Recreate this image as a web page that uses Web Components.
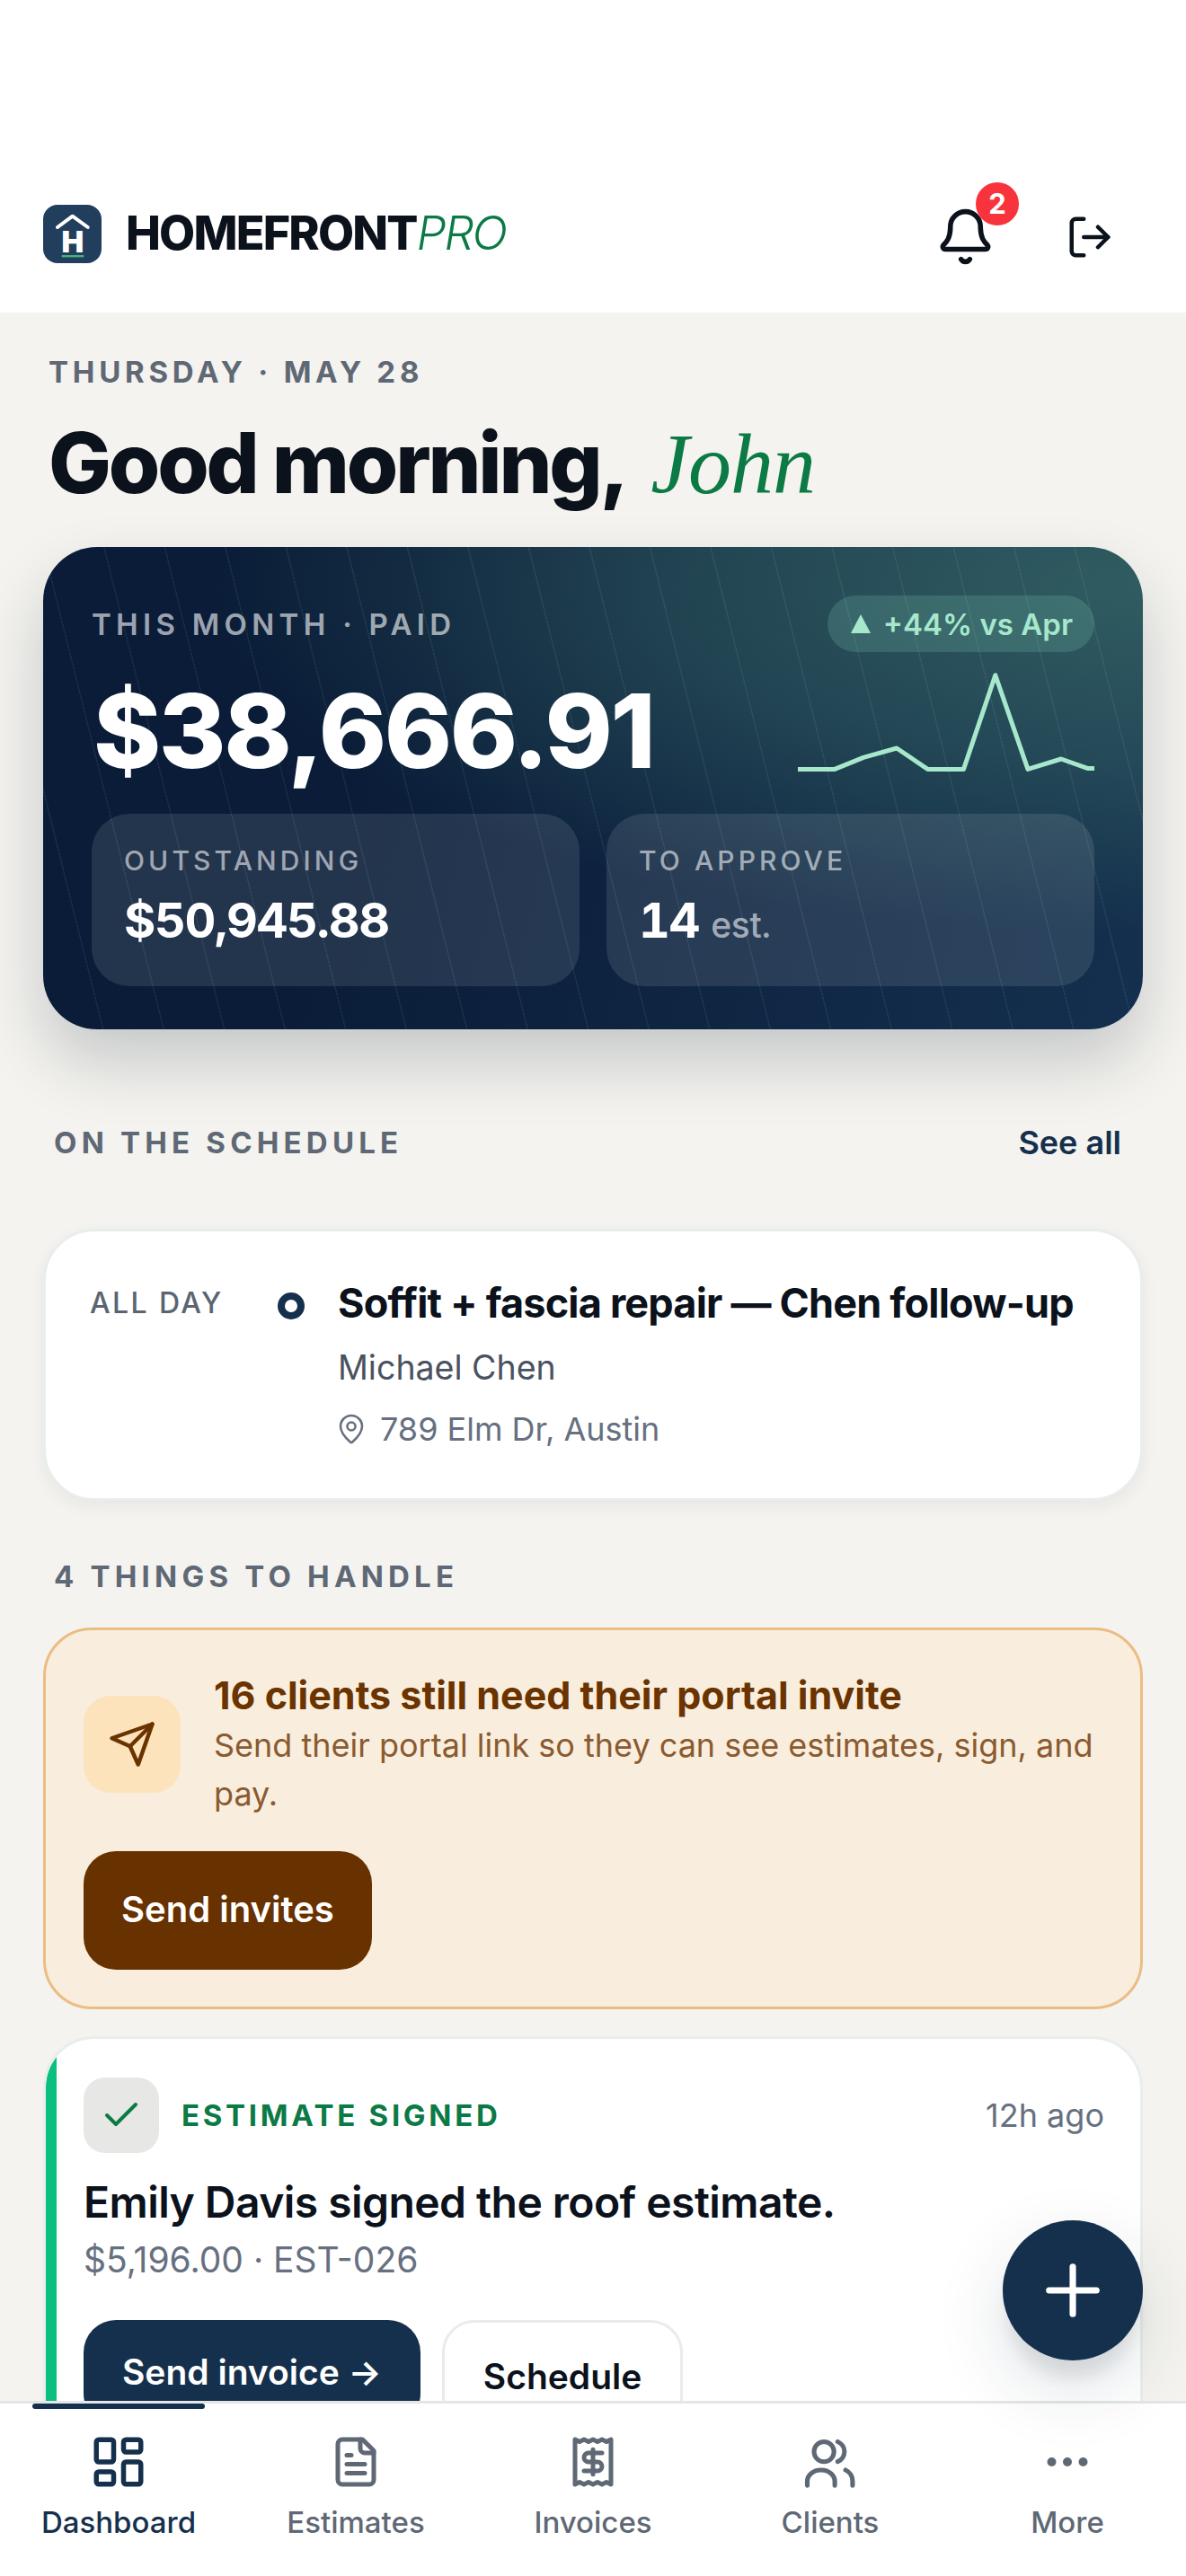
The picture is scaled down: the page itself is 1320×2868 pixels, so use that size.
<!DOCTYPE html>
<html lang="en">
<head>
<meta charset="utf-8">
<title>HomefrontPro dashboard</title>
<style>
  html, body { margin: 0; height: 100%; }
  body { font-family: Inter, "Liberation Sans", sans-serif; background: #f4f3ef; color: #0b121c; }
</style>
</head>
<body>
<hf-app>
  <hf-header slot="header"></hf-header>
  <hf-greeting date="THURSDAY · MAY 28" greeting="Good morning," name="John"></hf-greeting>
  <hf-hero></hf-hero>
  <hf-section-title style="margin-top:106px" link="See all">ON THE SCHEDULE</hf-section-title>
  <hf-schedule-card style="margin-top:76px"></hf-schedule-card>
  <hf-section-title style="margin-top:64px">4 THINGS TO HANDLE</hf-section-title>
  <hf-invite-card style="margin-top:37px"></hf-invite-card>
  <hf-activity-card style="margin-top:30px"></hf-activity-card>
  <hf-fab slot="overlay"></hf-fab>
  <hf-nav slot="nav"></hf-nav>
</hf-app>

<script>
(function () {
  // small helper: every element gets an open shadow root from its own template
  function define(name, html) {
    const template = document.createElement("template");
    template.innerHTML = html;
    customElements.define(name, class extends HTMLElement {
      constructor() {
        super();
        this.attachShadow({ mode: "open" });
        this.shadowRoot.appendChild(template.content.cloneNode(true));
      }
      connectedCallback() {
        this.shadowRoot.querySelectorAll("[data-attr]").forEach((el) => {
          el.textContent = this.getAttribute(el.dataset.attr) ?? "";
        });
      }
    });
  }

  const icons = {
    bell: '<path d="M10.268 21a2 2 0 0 0 3.464 0"/><path d="M3.262 15.326A1 1 0 0 0 4 17h16a1 1 0 0 0 .74-1.673C19.41 13.956 18 12.499 18 8A6 6 0 0 0 6 8c0 4.499-1.411 5.956-2.738 7.326"/>',
    logout: '<path d="M9 21H5a2 2 0 0 1-2-2V5a2 2 0 0 1 2-2h4"/><path d="m16 17 5-5-5-5"/><path d="M21 12H9"/>',
    pin: '<path d="M20 10c0 4.993-5.539 10.193-7.399 11.799a1 1 0 0 1-1.202 0C9.539 20.193 4 14.993 4 10a8 8 0 0 1 16 0"/><circle cx="12" cy="10" r="3"/>',
    send: '<path d="M22 2 2 9l9 4 4 9z"/><path d="M22 2 11 13"/>',
    check: '<path d="M20 6 9 17l-5-5"/>',
    plus: '<path d="M5 12h14"/><path d="M12 5v14"/>',
    dashboard: '<rect x="3" y="3" width="7" height="9" rx="1"/><rect x="14" y="3" width="7" height="5" rx="1"/><rect x="14" y="12" width="7" height="9" rx="1"/><rect x="3" y="16" width="7" height="5" rx="1"/>',
    file: '<path d="M15 2H6a2 2 0 0 0-2 2v16a2 2 0 0 0 2 2h12a2 2 0 0 0 2-2V7Z"/><path d="M14 2v4a2 2 0 0 0 2 2h4"/><path d="M10 9H8"/><path d="M16 13H8"/><path d="M16 17H8"/>',
    receipt: '<path d="M4 2v20l2-1 2 1 2-1 2 1 2-1 2 1 2-1 2 1V2l-2 1-2-1-2 1-2-1-2 1-2-1-2 1Z"/><path d="M16 8h-6a2 2 0 1 0 0 4h4a2 2 0 1 1 0 4H8"/><path d="M12 17.5v-11"/>',
    users: '<circle cx="9.7" cy="8.2" r="3.7"/><path d="M3.5 20.7v-1.5a5 4.2 0 0 1 5-4.2h.2a5 4.2 0 0 1 5 4.2v1.5"/><path d="M14.8 4.5a4 4 0 0 1 0 7.4"/><path d="M17.7 15a4.5 4.5 0 0 1 2.6 4.2v1.5"/>',
    more: '<circle cx="12" cy="12" r="1"/><circle cx="19" cy="12" r="1"/><circle cx="5" cy="12" r="1"/>'
  };

  class HfIcon extends HTMLElement {
    constructor() {
      super();
      this.attachShadow({ mode: "open" });
    }
    connectedCallback() {
      const size = this.getAttribute("size") || 72;
      const weight = this.getAttribute("weight") || 2;
      this.shadowRoot.innerHTML = `
        <style>
          :host { display: block; width: ${size}px; height: ${size}px; flex: none; }
          svg { display: block; width: 100%; height: 100%; fill: none; stroke: currentColor;
                stroke-width: ${weight}; stroke-linecap: round; stroke-linejoin: round; }
        </style>
        <svg viewBox="0 0 24 24">${icons[this.getAttribute("name")] || ""}</svg>`;
    }
  }
  customElements.define("hf-icon", HfIcon);

  define("hf-app", `
    <style>
      :host { display: flex; flex-direction: column; height: 2868px; position: relative; overflow: hidden; }
      main { flex: 1; min-height: 0; overflow: hidden; padding: 46px 48px 0; }
    </style>
    <slot name="header"></slot>
    <main><slot></slot></main>
    <slot name="nav"></slot>
    <slot name="overlay"></slot>
  `);

  define("hf-header", `
    <style>
      :host { display: flex; align-items: center; height: 176px; padding: 172px 48px 0; background: #fff; }
      .tile { width: 65px; height: 65px; flex: none; display: block; }
      .word { margin-left: 27px; font-size: 52px; line-height: 60px; font-weight: 800; letter-spacing: -1.8px; color: #0b121c; white-space: nowrap; }
      .word i { font-weight: 300; color: #0b7a45; letter-spacing: -2px; }
      .actions { margin-left: auto; margin-top: 7px; display: flex; align-items: center; }
      .bell { position: relative; margin-right: 78px; }
      .bell hf-icon { color: #0b121c; }
      .count { position: absolute; left: 45px; top: -27px; width: 48px; height: 48px; border-radius: 50%; background: #f8333c; color: #fff; font-size: 31px; font-weight: 700; line-height: 48px; text-align: center; }
      .out { color: #0b121c; margin-right: 32px; }
    </style>
    <svg class="tile" viewBox="0 0 65 65" aria-hidden="true">
      <rect width="65" height="65" rx="16" fill="#213e5d"/>
      <path d="M16 25 32.7 12.7 49.7 25" fill="none" stroke="#fff" stroke-width="4" stroke-linecap="round" stroke-linejoin="round"/>
      <text x="32.8" y="53" text-anchor="middle" font-family="Inter, sans-serif" font-size="33" font-weight="900" fill="#fff">H</text>
      <rect x="20.7" y="56" width="24.6" height="2.4" fill="#3fb57f"/>
    </svg>
    <span class="word">HOMEFRONT<i>PRO</i></span>
    <div class="actions">
      <div class="bell"><hf-icon name="bell" size="67"></hf-icon><span class="count">2</span></div>
      <hf-icon class="out" name="logout" size="54"></hf-icon>
    </div>
  `);

  define("hf-greeting", `
    <style>
      :host { display: block; padding-left: 6px; }
      .date { font-size: 33px; line-height: 40px; font-weight: 700; letter-spacing: 4.75px; color: #5f6875; }
      h1 { margin: 27px 0 0; height: 108px; font-size: 93px; line-height: 108px; font-weight: 800; letter-spacing: -3.2px; color: #0b121c; white-space: nowrap; }
      em { font-family: "Liberation Serif", serif; font-style: italic; font-weight: 400; font-size: 96px; line-height: 0; letter-spacing: -1px; color: #0b7a45; margin-left: 14px; }
    </style>
    <div class="date" data-attr="date"></div>
    <h1><span data-attr="greeting"></span> <em data-attr="name"></em></h1>
  `);

  define("hf-stat", `
    <style>
      :host { display: block; box-sizing: border-box; height: 192px; padding: 32px 36px 0; border-radius: 42px; background: rgba(255,255,255,.105); }
      .label { font-size: 30px; line-height: 40px; font-weight: 500; letter-spacing: 4.1px; color: rgba(255,255,255,.58); }
      .value { margin-top: 15px; line-height: 64px; font-size: 54px; font-weight: 700; font-variant-numeric: tabular-nums; letter-spacing: -1.4px; color: #fff; }
      ::slotted(small) { font-size: 39px; font-weight: 500; letter-spacing: -.3px; color: rgba(255,255,255,.58); }
    </style>
    <div class="label" data-attr="label"></div>
    <div class="value"><slot></slot></div>
  `);

  define("hf-hero", `
    <style>
      :host {
        display: block; box-sizing: border-box; height: 537px; margin-top: 40px; padding: 54px 54px 48px;
        border-radius: 60px; color: #fff;
        box-shadow: 0 36px 72px rgba(15, 30, 50, .2);
        background:
          repeating-linear-gradient(76deg, transparent 0 64px, rgba(190, 225, 235, .075) 64px 65.5px),
          radial-gradient(85% 72% at 100% 8%, rgba(58, 108, 104, .75), rgba(58, 108, 104, .45) 50%, rgba(58, 108, 104, 0) 100%),
          linear-gradient(105deg, #0a1c38 30%, #14304e 100%);
      }
      .top, .mid { display: flex; justify-content: space-between; }
      .top { align-items: center; height: 63px; }
      .eyebrow { font-size: 33px; line-height: 40px; font-weight: 600; letter-spacing: 5.3px; color: rgba(255,255,255,.62); }
      .pill { display: flex; align-items: center; gap: 14px; height: 63px; box-sizing: border-box; padding: 0 24px 0 26px; border-radius: 32px; background: rgba(150, 230, 200, .17); color: #a7e8cc; font-size: 33px; font-weight: 600; }
      .tri { width: 0; height: 0; border-left: 11.5px solid transparent; border-right: 11.5px solid transparent; border-bottom: 21px solid #a7e8cc; }
      .mid { margin-top: 28px; height: 120px; }
      .amount { font-size: 114px; line-height: 120px; font-weight: 800; letter-spacing: -2.4px; margin-left: 2px; }
      .spark { width: 330px; height: 120px; overflow: visible; flex: none; }
      .stats { margin-top: 32px; display: grid; grid-template-columns: 1fr 1fr; gap: 30px; }
    </style>
    <div class="top">
      <span class="eyebrow">THIS MONTH · PAID</span>
      <span class="pill"><span class="tri"></span>+44% vs Apr</span>
    </div>
    <div class="mid">
      <span class="amount">$38,666.91</span>
      <svg class="spark" viewBox="0 0 330 120" aria-hidden="true">
        <polyline points="0,102.4 41,102.4 73,89.4 110,79 144.5,102.4 184.5,102.4 219.8,-2.3 256,102.4 293,91 323,101.6 330,101.6" fill="none" stroke="#a7e8cc" stroke-width="5" stroke-linejoin="round"/>
      </svg>
    </div>
    <div class="stats">
      <hf-stat label="OUTSTANDING">$50,945.88</hf-stat>
      <hf-stat label="TO APPROVE">14 <small>est.</small></hf-stat>
    </div>
  `);

  define("hf-section-title", `
    <style>
      :host { display: flex; justify-content: space-between; align-items: center; height: 40px; padding: 0 24px 0 12px; }
      .t { font-size: 33px; line-height: 40px; font-weight: 700; letter-spacing: 5.2px; color: #5f6875; }
      .l { font-size: 36px; line-height: 40px; font-weight: 600; color: #15304d; }
    </style>
    <span class="t"><slot></slot></span>
    <span class="l" data-attr="link"></span>
  `);

  define("hf-schedule-card", `
    <style>
      :host { display: grid; grid-template-columns: 209px 67px 1fr; box-sizing: border-box; height: 303px; padding: 53px 49px; border: 3px solid #e9edec; border-radius: 57px; background: #fff; box-shadow: 0 6px 18px rgba(20, 35, 50, .06); }
      .time { font-size: 32px; line-height: 54px; font-weight: 500; letter-spacing: 2.4px; color: #5b6472; white-space: nowrap; }
      .dot { box-sizing: border-box; width: 30px; height: 30px; margin-top: 15px; border-radius: 50%; border: 8px solid #15304d; background: #fff; }
      h3 { margin: 0; font-size: 45px; line-height: 54px; font-weight: 700; letter-spacing: -.8px; color: #0b121c; white-space: nowrap; }
      .who { margin-top: 21px; font-size: 37.5px; line-height: 48px; color: #4a5260; }
      .where { margin-top: 20px; display: flex; align-items: center; gap: 14px; font-size: 36px; line-height: 48px; color: #667080; }
      .where hf-icon { margin-left: -3px; }
    </style>
    <div class="time">ALL DAY</div>
    <div class="dot"></div>
    <div>
      <h3>Soffit + fascia repair — Chen follow-up</h3>
      <div class="who">Michael Chen</div>
      <div class="where"><hf-icon name="pin" size="36" weight="1.7"></hf-icon>789 Elm Dr, Austin</div>
    </div>
  `);

  define("hf-button", `
    <style>
      :host { display: inline-flex; align-items: center; justify-content: center; box-sizing: border-box; padding: 0 var(--btn-px, 43px) var(--btn-drop, 0); border-radius: 36px; font-size: var(--btn-fs, 39px); font-weight: 600; white-space: nowrap; background: var(--btn-bg, #15304d); color: var(--btn-fg, #fff); border: var(--btn-border, 0); height: var(--btn-h, 118px); }
    </style>
    <slot></slot>
  `);

  define("hf-invite-card", `
    <style>
      :host { display: block; box-sizing: border-box; height: 425px; padding: 45px 42px 0; border: 3px solid #ecbc85; border-radius: 54px; background: #f9eedd; }
      .row { display: flex; align-items: center; gap: 37px; }
      .tile { width: 108px; height: 108px; flex: none; display: grid; place-items: center; border-radius: 30px; background: #fde3bc; color: #6b3300; }
      h3 { margin: 0 0 2px; font-size: 43px; line-height: 54px; font-weight: 700; color: #6b3300; white-space: nowrap; }
      p { margin: 0; font-size: 36px; line-height: 54px; letter-spacing: 0; color: #8a5a30; }
      hf-button { margin-top: 37px; --btn-bg: #683100; --btn-h: 132px; --btn-fs: 40px; --btn-drop: 4px; --btn-px: 42px; }
    </style>
    <div class="row">
      <div class="tile"><hf-icon name="send" size="54"></hf-icon></div>
      <div>
        <h3>16 clients still need their portal invite</h3>
        <p>Send their portal link so they can see estimates, sign, and pay.</p>
      </div>
    </div>
    <hf-button>Send invites</hf-button>
  `);

  define("hf-activity-card", `
    <style>
      :host { display: block; box-sizing: border-box; height: 480px; padding: 43px 40px 0 42px; border: 3px solid #e9edec; border-radius: 57px; background: linear-gradient(90deg, #0abf7f 12px, #fff 12px) padding-box; }
      .head { display: flex; align-items: center; }
      .tile { width: 84px; height: 84px; flex: none; display: grid; place-items: center; border-radius: 24px; background: #e7e7e6; color: #0b7a45; }
      .kind { margin-left: 25px; font-size: 33px; font-weight: 700; letter-spacing: 3.7px; color: #0b7a45; }
      .ago { margin-left: auto; font-size: 36px; color: #667080; }
      h3 { margin: 28px 0 0; font-size: 48px; line-height: 54px; font-weight: 600; letter-spacing: -.55px; color: #0b121c; }
      .sub { margin-top: 13px; font-size: 39px; line-height: 48px; color: #667080; }
      .btns { margin-top: 43px; display: flex; align-items: flex-start; gap: 24px; }
      .ghost { --btn-bg: #fff; --btn-fg: #0b121c; --btn-border: 3px solid #e8ecec; --btn-h: 124px; }
    </style>
    <div class="head">
      <div class="tile"><hf-icon name="check" size="48"></hf-icon></div>
      <span class="kind">ESTIMATE SIGNED</span>
      <span class="ago">12h ago</span>
    </div>
    <h3>Emily Davis signed the roof estimate.</h3>
    <div class="sub">$5,196.00 · EST-026</div>
    <div class="btns">
      <hf-button style="--btn-drop:3px">Send invoice →</hf-button>
      <hf-button class="ghost">Schedule</hf-button>
    </div>
  `);

  define("hf-fab", `
    <style>
      :host { position: absolute; right: 48px; bottom: 240px; width: 156px; height: 156px; display: grid; place-items: center; border-radius: 50%; background: #15304d; color: #fff; box-shadow: 0 24px 18px -6px rgba(30, 50, 70, .1), 0 30px 80px rgba(20, 40, 60, .14); }
    </style>
    <hf-icon name="plus" size="90" weight="1.9"></hf-icon>
  `);

  define("hf-nav-item", `
    <style>
      :host { display: flex; flex-direction: column; align-items: center; gap: 11px; padding-top: 29px; color: #5f6875; }
      :host([active]) { color: #15304d; }
      .i { height: 72px; display: flex; align-items: center; justify-content: center; }
      span { font-size: 33px; line-height: 40px; font-weight: 500; }
    </style>
    <div class="i"><slot></slot></div>
    <span data-attr="label"></span>
  `);

  define("hf-nav", `
    <style>
      :host { display: grid; grid-template-columns: repeat(5, 1fr); flex: none; position: relative; box-sizing: border-box; height: 195px; border-top: 3px solid #e4e6e6; background: #fff; }
      .bar { position: absolute; left: 36px; top: 0; width: 192px; height: 6px; border-radius: 3px; background: #15304d; }
    </style>
    <div class="bar"></div>
    <hf-nav-item label="Dashboard" active><hf-icon name="dashboard" size="66"></hf-icon></hf-nav-item>
    <hf-nav-item label="Estimates"><hf-icon name="file" size="60"></hf-icon></hf-nav-item>
    <hf-nav-item label="Invoices"><hf-icon name="receipt" size="60"></hf-icon></hf-nav-item>
    <hf-nav-item label="Clients"><hf-icon name="users" weight="1.7"></hf-icon></hf-nav-item>
    <hf-nav-item label="More"><hf-icon name="more" size="60"></hf-icon></hf-nav-item>
  `);
})();
</script>
</body>
</html>
